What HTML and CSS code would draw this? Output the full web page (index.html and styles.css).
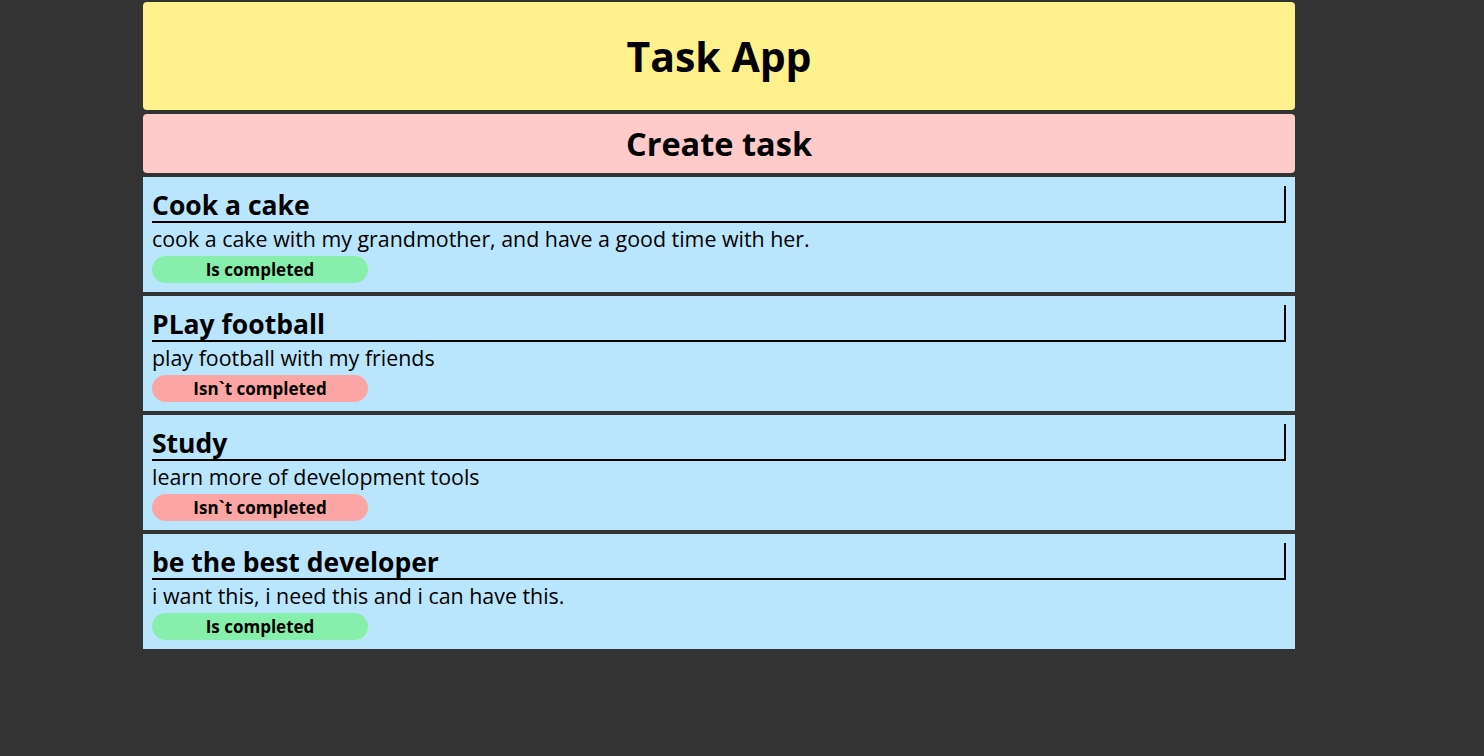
FILE: index.html
```html
<!DOCTYPE html>
<html lang="en">
<head>
  <meta charset="UTF-8">
  <meta name="viewport" content="width=device-width, initial-scale=1.0">
  <link rel="stylesheet" href="styles.css">
  <title>Task App</title>
</head>
<body>
  <div class="app">
    <div class="app_title">
      <h1>Task App</h1>
    </div>
    <div class="create_task">
      <h2>Create task</h2>
    </div>
    <div class="tasks_list">
      <div class="task">
        <h3 class="task_title">Cook a cake</h3>
        <p class="task_description">cook a cake with my grandmother, and have a good time with her.</p>
        <button class="task_status done">Is completed</button>
      </div>
      <div class="task">
        <h3 class="task_title">PLay football</h3>
        <p class="task_description">play football with my friends</p>
        <button class="task_status not_done">Isn`t completed</button>
      </div>
      <div class="task">
        <h3 class="task_title">Study</h3>
        <p class="task_description">learn more of development tools</p>
        <button class="task_status not_done">Isn`t completed</button>
      </div>
      <div class="task">
        <h3 class="task_title">be the best developer</h3>
        <p class="task_description">i want this, i need this and i can have this.</p>
        <button class="task_status done">Is completed</button>
      </div>
    </div>
  </div>
</body>
</html>
```

FILE: styles.css
```css
/* Basics */
body {
  margin: 0;
  background-color: #333333;
  color: #000000;
  font-family: "Open Sans", "Noto Sans", sans-serif;
}

.app {
  display: flex;
  flex-direction: column;
  gap: 4px;
  width: 1152px;
  margin-left: 143px;
  padding-top: 2px;
}

/* Header */
.app_title {
  display: flex;
  justify-content: center;
  align-items: center;
  height: 108px;
  background-color: #fef08a;
  border-radius: 4px;
}

.app_title h1 {
  margin: 0;
  font-size: 41px;
  font-weight: bold;
}

.create_task {
  display: flex;
  justify-content: center;
  align-items: center;
  height: 59px;
  background-color: #fecaca;
  border-radius: 4px;
}

.create_task h2 {
  margin: 0;
  font-size: 32.5px;
  font-weight: bold;
}

/* Task List */
.tasks_list {
  display: flex;
  flex-direction: column;
  gap: 4px;
}

.task {
  display: flex;
  flex-direction: column;
  align-items: flex-start;
  height: 115px;
  box-sizing: border-box;
  padding: 9px 9px 9px 9px;
  background-color: #bae6fd;
}

.task_title {
  align-self: stretch;
  margin: 0;
  height: 37px;
  box-sizing: border-box;
  padding-top: 3px;
  font-size: 26.5px;
  line-height: 32px;
  font-weight: bold;
  white-space: nowrap;
  border-right: 2px solid #000000;
  border-bottom: 2px solid #000000;
}

.task_description {
  margin: 1px 0 0 0;
  font-size: 21.4px;
  line-height: 30px;
  white-space: nowrap;
}

.task_status {
  width: 216px;
  height: 27px;
  margin-top: 2px;
  padding: 0;
  border: none;
  border-radius: 14px;
  font-family: inherit;
  font-size: 17px;
  font-weight: bold;
  color: #000000;
  cursor: pointer;
}

.done {
  background-color: #86efac;
}

.not_done {
  background-color: #fca5a5;
}
```
